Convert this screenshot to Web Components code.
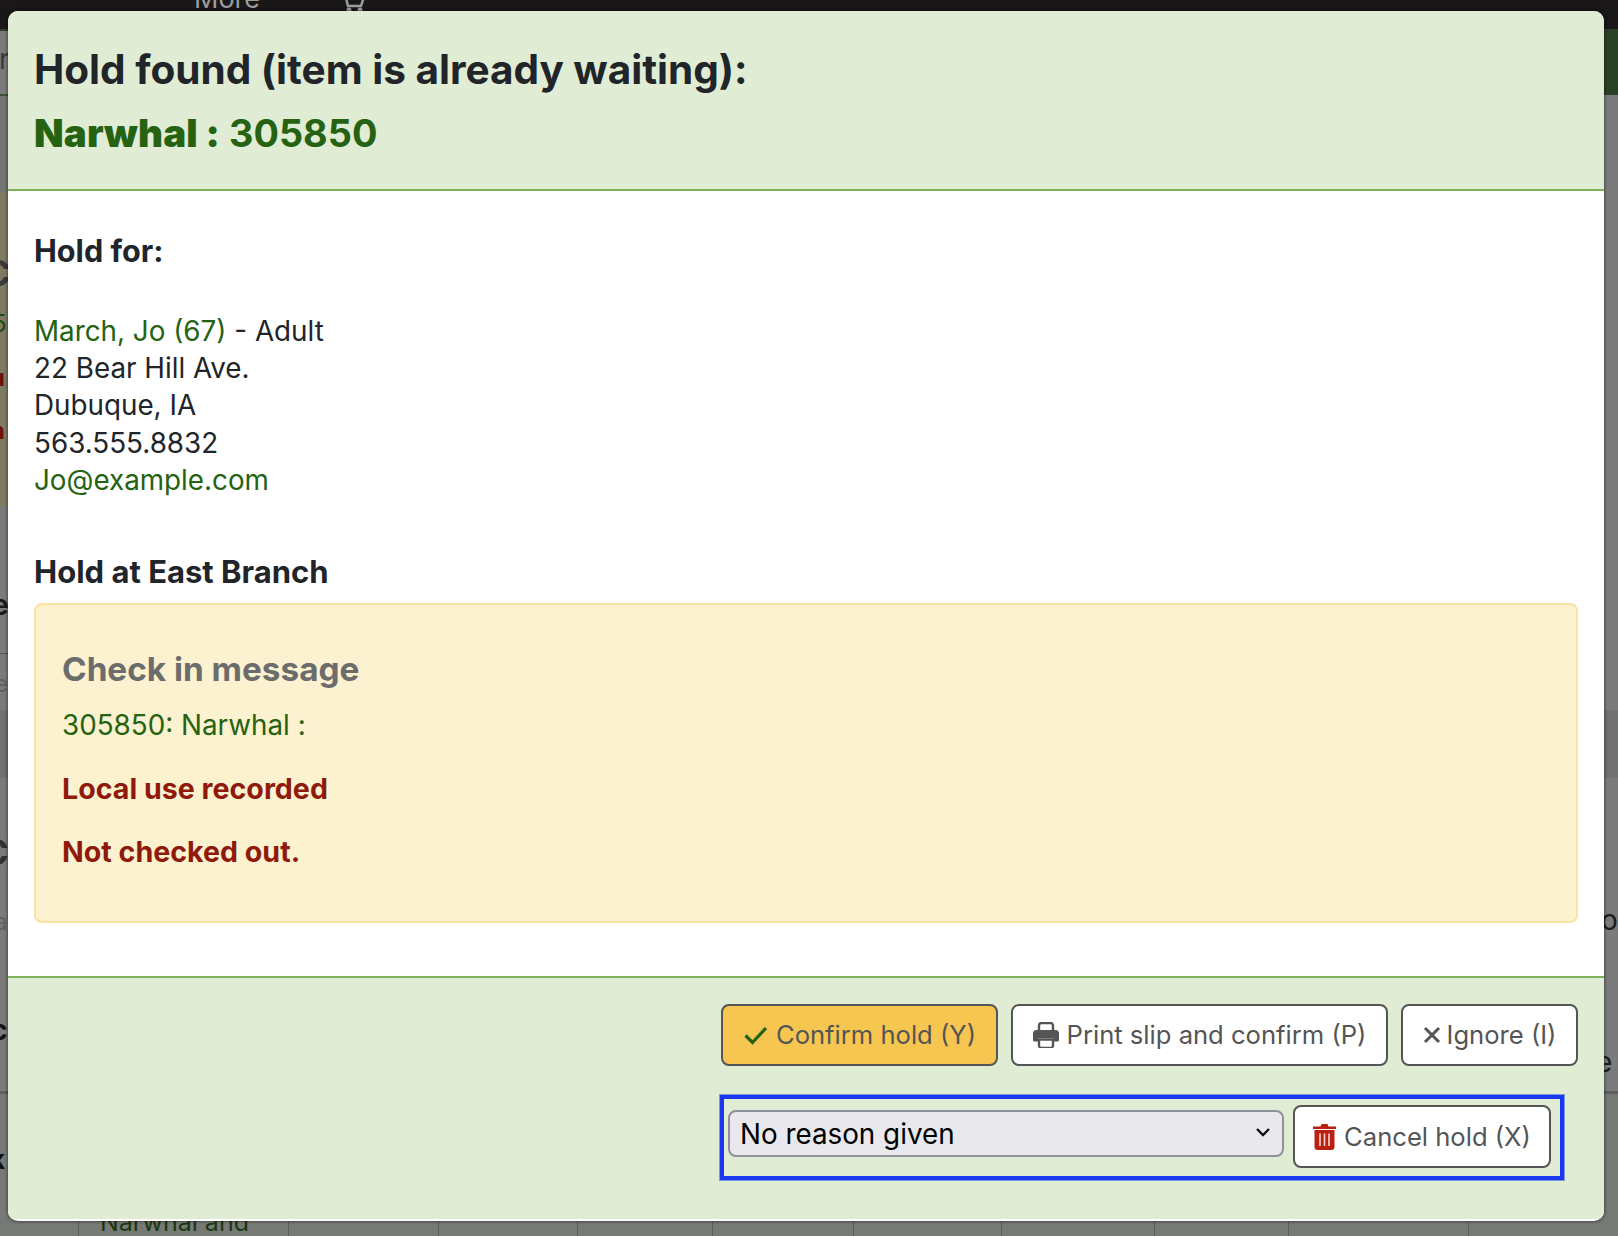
<!DOCTYPE html>
<html lang="en"><head><meta charset="utf-8"><title>Hold found</title>
<style>
html,body{margin:0;padding:0;background:#7a7b7a;overflow:hidden}
body{width:1618px;height:1236px;font-family:Inter,"Liberation Sans",sans-serif}
</style></head><body>
<x-page>
  <x-backdrop slot="backdrop"></x-backdrop>
  <x-modal>
    <x-modal-header slot="header">
      <h-title>Hold found (item is already waiting):</h-title>
      <h-sub slot="sub"><b style="font-size:38.500px;letter-spacing:.15px">Narwhal :</b> 305850</h-sub>
    </x-modal-header>
    <x-modal-body slot="body"></x-modal-body>
    <x-modal-footer slot="footer"></x-modal-footer>
  </x-modal>
</x-page>
<script>
const def=(name,html,init)=>customElements.define(name,class extends HTMLElement{
  constructor(){super();this.attachShadow({mode:'open'}).innerHTML=html;}
});
def('x-page',`<style>:host{display:block;position:relative;width:1618px;height:1236px;overflow:hidden}
.m{position:relative;padding:11px 14px 0 8px}</style><slot name="backdrop"></slot><div class="m"><slot></slot></div>`);

const frag=(t,l,cy,c,fs=26,w=400)=>`<span style="position:absolute;left:${l}px;top:${cy-fs}px;line-height:${fs*2}px;font-size:${fs}px;font-weight:${w};color:${c}">${t}</span>`;
const box=(l,t,w,h,c)=>`<i style="position:absolute;left:${l}px;top:${t}px;width:${w}px;height:${h}px;background:${c}"></i>`;
const vlines=[78,288,438,577,712,853,1001,1154,1288,1468].map(x=>box(x,1205,1,31,'#5c5e5c')).join('');
def('x-backdrop',`<style>:host{position:absolute;inset:0;display:block;font-family:Inter,"Liberation Sans",sans-serif;background:#7b7b7b}</style>
${box(0,1092,1618,144,'#777977')}
${box(0,0,1618,29,'#1a1718')}
${box(1604,29,14,66,'#2a4026')}
${box(0,29,1604,2,'#2a4026')}
${box(0,94,1604,2,'#3d5236')}
${box(0,192,10,314,'#7f7a62')}
${box(0,96,10,96,'#747675')}
${box(0,710,10,68,'#707271')}
${box(1604,710,14,68,'#707271')}
${box(0,653,10,1,'#555')}
${box(0,1091,1618,3,'#5f5f5f')}
${vlines}
${frag('More',194,-1,'#9c9c9c',27)}
<svg style="position:absolute;left:340px;top:-8px" width="26" height="22" viewBox="0 0 26 22"><path d="M1 2h4l3 12h13l3-9" fill="none" stroke="#9c9c9c" stroke-width="2.5"/><circle cx="9" cy="18" r="2.5" fill="#9c9c9c"/><circle cx="20" cy="18" r="2.5" fill="#9c9c9c"/></svg>
${frag('r',-1,59,'#3a3a3a',28)}
${frag('C',-16,273,'#3a3a3a',36,700)}
${frag('5',-8,324,'#1b4a10',24)}
${frag('u',-10,378,'#6e1008',24,700)}
${frag('n',-10,431,'#6e1008',24,700)}
${frag('e',-8,605,'#1a1a1a',28,700)}
${frag('e',-6,684,'#606060',24)}
${frag('C',-18,852,'#333',36,700)}
${frag('a',-6,922,'#606060',24)}
${frag('c',-9,1030,'#141414',28,700)}
${frag('k',-10,1160,'#111',26,700)}
${frag('or',1601,920,'#1c1c1c',28)}
${frag('e',1596,1062,'#1c1c1c',28)}
${frag('Narwhal and',100,1222,'#17390c',25)}`);

def('x-modal',`<style>:host{display:flex;flex-direction:column;height:1210px;border-radius:10px;overflow:hidden;background:#fff;color:#212529;box-shadow:0 0 3px 1px rgba(0,0,0,.4);font-family:Inter,"Liberation Sans",sans-serif}</style>
<slot name="header"></slot><slot name="body"></slot><slot name="footer"></slot>`);

def('x-modal-header',`<style>:host{display:block;height:178px;box-sizing:content-box;background:#e0edd4;border-bottom:2px solid #7eb05a;padding:0 26px}
.t{padding-top:29px;display:block;font-size:40.500px;line-height:60px;font-weight:700;color:#212529}
.s{display:block;margin-top:3px;font-size:37.800px;line-height:60px;font-weight:700;color:#256212}
</style><span class="t"><slot></slot></span><span class="s"><slot name="sub"></slot></span>`);
def('h-title',`<style>:host{display:inline}</style><slot></slot>`);
def('h-sub',`<style>:host{display:inline}</style><slot></slot>`);

def('x-modal-body',`<style>:host{display:block;height:785px;box-sizing:border-box;padding:0 26px;background:#fff;font-size:27.800px;line-height:37.200px;color:#212529}
h5{margin:0;font-size:30.600px;line-height:37px;font-weight:700}
a{color:#256212;text-decoration:none}
.hf{padding-top:41px}
address{font-style:normal;margin-top:44px}
.ha{margin-top:54px;font-size:31px}
.box{box-sizing:border-box;height:320px;margin-top:13px;padding:0 26px;border:2px solid #f8e3a0;border-radius:8px;background:#fcf2cf}
h4{margin:0;padding-top:42px;font-size:33.300px;line-height:44px;font-weight:700;color:#6c6c6c}
.g{margin:16px 0 0;color:#256212;line-height:37px}
.r{margin:26px 0 0;color:#8f1a0c;font-weight:700;font-size:28.600px;line-height:37px}
</style>
<h5 class="hf">Hold for:</h5>
<address><a>March, Jo (67)</a> - Adult<br>22 Bear Hill Ave.<br>Dubuque, IA<br>563.555.8832<br><a>Jo@example.com</a></address>
<h5 class="ha">Hold at East Branch</h5>
<div class="box"><h4>Check in message</h4><p class="g">305850: Narwhal :</p><p class="r">Local use recorded</p><p class="r">Not checked out.</p></div>`);

const ic={
check:`<svg width="25" height="20" viewBox="0 0 25 20"><path d="M2.5 10.5l7 7L23 3" fill="none" stroke="#256212" stroke-width="3.2"/></svg>`,
print:`<svg width="26" height="26" viewBox="0 0 26 26"><path d="M6 8V3.500A2.500 2.500 0 0 1 8.500 1h9A2.500 2.500 0 0 1 20 3.500V8" fill="none" stroke="#555" stroke-width="2.400"/><path d="M3.500 8h19A3.500 3.500 0 0 1 26 11.500V18a1.500 1.500 0 0 1-1.500 1.500H21V16H5v3.500H1.500A1.500 1.500 0 0 1 0 18v-6.500A3.500 3.500 0 0 1 3.500 8z" fill="#555"/><path d="M6 17.500h14v6a2.500 2.500 0 0 1-2.500 2.500h-9A2.500 2.500 0 0 1 6 23.500z" fill="none" stroke="#555" stroke-width="2.400"/></svg>`,
times:`<svg width="18" height="18" viewBox="0 0 18 18"><path d="M2 2l14 14M16 2L2 16" fill="none" stroke="#555" stroke-width="3"/></svg>`,
trash:`<svg width="23" height="27" viewBox="0 0 23 27"><path d="M0 3.500h7.500L8.500 1h6l1 2.500H23V6H0z" fill="#bb2113"/><path d="M1.500 7h20v17a3 3 0 0 1-3 3h-14a3 3 0 0 1-3-3z" fill="#bb2113"/><path d="M7 10.500v12.500M11.500 10.500v12.500M16 10.500v12.500" stroke="#f4d8d4" stroke-width="1.600"/></svg>`};

def('x-btn',`<style>:host{display:inline-flex;align-items:center;justify-content:center;box-sizing:border-box;height:62px;background:#fff;border:2px solid #555;border-radius:8px;color:#555;font-size:25.600px;line-height:1;white-space:nowrap}
:host([primary]){background:#f6c650}
.w{display:inline-flex;align-items:center;gap:var(--g,8px)}</style><span class="w"><slot name="icon"></slot><slot></slot></span>`);

def('x-modal-footer',`<style>:host{display:flex;flex-direction:column;align-items:flex-end;box-sizing:border-box;height:243px;background:#e0edd4;border-top:2px solid #7eb05a;padding:26px 26px 0}
.row{display:flex;gap:13px}
x-btn span{display:inline-flex}
.c{width:277px}.p{width:377px}.i{width:177px;--g:6px}
.f{display:flex;align-items:flex-start;gap:9px;box-sizing:border-box;width:844px;height:85px;margin:29px 14px 0 0;border:4px solid #1a38f0;outline:1px solid #7a98e0;padding:6px 9px 0 4px;background:#e0edd4}
.sel{position:relative;flex:1;margin-top:5px;display:flex}
select{appearance:none;-webkit-appearance:none;width:100%;box-sizing:border-box;height:47px;background:#e9e9ed;border:2px solid #8f8f9d;border-radius:8px;color:#000;font:27.800px Inter,"Liberation Sans",sans-serif;padding:0 10px}
.sel svg{position:absolute;right:13px;top:17px}
.x{width:258px;height:63px}
</style>
<div class="row">
<x-btn class="c" primary><span slot="icon">${ic.check}</span>Confirm hold (Y)</x-btn>
<x-btn class="p"><span slot="icon">${ic.print}</span>Print slip and confirm (P)</x-btn>
<x-btn class="i"><span slot="icon">${ic.times}</span>Ignore (I)</x-btn>
</div>
<div class="f"><div class="sel"><select><option>No reason given</option></select><svg width="16" height="11" viewBox="0 0 16 11"><path d="M2 2l6 6 6-6" fill="none" stroke="#111" stroke-width="2.400"/></svg></div>
<x-btn class="x"><span slot="icon">${ic.trash}</span>Cancel hold (X)</x-btn></div>`);
</script>
</body></html>
